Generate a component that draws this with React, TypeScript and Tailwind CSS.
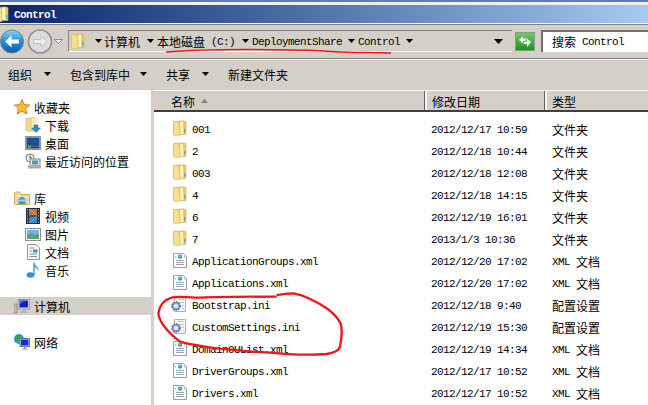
const cjk = "font-['Noto_Sans_CJK_SC','Liberation_Sans',sans-serif] text-[12px] leading-none text-black pt-[2px]";
const mono = "font-['Liberation_Mono','Noto_Sans_CJK_SC',monospace] text-[11px] tracking-[-0.6px] leading-none text-black pt-[3px]";

function Arrow({ className = "" }: { className?: string }) {
  return (
    <svg width="7" height="4" viewBox="0 0 7 4" className={"shrink-0 " + className}>
      <path d="M0 0H7L3.5 4Z" fill="#000" />
    </svg>
  );
}

function Folder({ size = 16 }: { size?: number }) {
  return (
    <svg width={size} height={size} viewBox="0 0 16 16" className="shrink-0">
      <path d="M1.5 1.5 L11 .8 L14 1.5 V14.5 H3 Q1.5 14.5 1.5 13Z" fill="#ecc95c" stroke="#cfae55" strokeWidth="0.6" />
      <path d="M1.5 1.5 L7 2 L8 15.5 L3 15.5 Q1.5 15.5 1.5 13.5Z" fill="#f6e08a" stroke="#d9bc63" strokeWidth="0.6" />
      <path d="M8 2 L11 1.5 L11.5 14 L8.4 14Z" fill="#fdf0b8" />
      <rect x="12" y="9" width="1.4" height="3.5" fill="#4fa6dc" />
    </svg>
  );
}

function XmlDoc() {
  return (
    <svg width="16" height="17" viewBox="0 0 16 17" className="shrink-0">
      <path d="M1.5 1.5H11L14.5 4.5V15.5H1.5Z" fill="#fbfcfd" stroke="#9a9fa6" />
      <circle cx="8" cy="4.6" r="2.2" fill="#2f9c8f" />
      <circle cx="7.5" cy="4.2" r="1" fill="#8fd0f0" />
      <path d="M4 4.5L3 5.2M12 4.5L13 5.2" stroke="#556" strokeWidth="0.7" />
      <path d="M4 8.5H12M4 10.5H12M4 12.5H12" stroke="#9aa4b4" />
    </svg>
  );
}

function IniDoc() {
  return (
    <svg width="17" height="17" viewBox="0 0 17 17" className="shrink-0">
      <path d="M4.5 1.5H15.5V15.5H4.5Z" fill="#f6f6f6" stroke="#b0b0b0" />
      <path d="M8 3.5H14M10 6.5H14M12 9.5H14M12 12.5H14" stroke="#c6c6c6" />
      <circle cx="6" cy="10" r="4" fill="#8fa5c8" stroke="#4d6a9a" strokeWidth="1.6" strokeDasharray="1.6 1" />
      <circle cx="6" cy="10" r="2" fill="#eef2f8" />
    </svg>
  );
}

function Star() {
  return (
    <svg width="16" height="16" viewBox="0 0 16 16" className="shrink-0">
      <path d="M8 .5L10.2 5.6L15.6 6.1L11.5 9.7L12.8 15L8 12.2L3.2 15L4.5 9.7L.4 6.1L5.8 5.6Z" fill="#fbc02d" stroke="#e2762a" />
    </svg>
  );
}

function Downloads() {
  return (
    <svg width="16" height="16" viewBox="0 0 16 16" className="shrink-0">
      <path d="M1 1.5L9 .5L11 1.5V14H2Q1 14 1 13Z" fill="#f0d98a" stroke="#c9ad5a" strokeWidth="0.6" />
      <path d="M7 1.5H11V11H7Z" fill="#fbeeb5" />
      <path d="M9 8H13V11H15.5L11 15.5L6.5 11H9Z" fill="#2d8fdc" stroke="#1d5fa8" strokeWidth="0.5" />
    </svg>
  );
}

function Desktop() {
  return (
    <svg width="16" height="14" viewBox="0 0 16 14" className="shrink-0">
      <rect x=".5" y=".5" width="15" height="13" fill="#c9ced6" stroke="#8a93a0" />
      <rect x="1.5" y="1.5" width="13" height="9" fill="#1c4f95" />
      <rect x="1.5" y="10.5" width="13" height="2" fill="#3a3a3a" />
      <rect x="3" y="9.5" width="3" height="3" fill="#5aa04a" />
    </svg>
  );
}

function Recent() {
  return (
    <svg width="16" height="16" viewBox="0 0 16 16" className="shrink-0">
      <circle cx="5" cy="5" r="4" fill="#f2f2f2" stroke="#777" />
      <path d="M5 2.5V5H7" stroke="#444" fill="none" />
      <rect x="5" y="6" width="10" height="7" fill="#dfe4ea" stroke="#808890" />
      <rect x="7" y="7.5" width="6" height="4" fill="#5c97a8" />
      <rect x="3" y="13" width="13" height="2.5" fill="#a9a9a9" />
    </svg>
  );
}

function Library() {
  return (
    <svg width="16" height="14" viewBox="0 0 16 14" className="shrink-0">
      <path d="M.5 2V12.5Q.5 13.5 1.5 13.5H14.5Q15.5 13.5 15.5 12.5V3.5H7L5.5 1H1.5Z" fill="#f1de9a" stroke="#c7a95a" />
      <path d="M4.5 8L8 5.5L11.5 8V13H4.5Z" fill="#3d96d6" />
      <rect x="2.5" y="8.5" width="11" height="2" fill="#9ed0ee" />
    </svg>
  );
}

function Video() {
  return (
    <svg width="14" height="16" viewBox="0 0 14 16" className="shrink-0">
      <rect x="0" y="0" width="14" height="16" fill="#1f2f3a" />
      <rect x="3" y="1" width="8" height="6.5" fill="#d0703a" />
      <rect x="3" y="8.5" width="8" height="6.5" fill="#3f86c8" />
      <path d="M3 1L11 7.5M11 8.5L3 15" stroke="#7ab0d8" />
      <path d="M1 2H2M1 5H2M1 8H2M1 11H2M1 14H2M12 2H13M12 5H13M12 8H13M12 11H13M12 14H13" stroke="#dfe8ee" />
    </svg>
  );
}

function Pictures() {
  return (
    <svg width="16" height="13" viewBox="0 0 16 13" className="shrink-0">
      <rect x=".5" y=".5" width="15" height="12" fill="#f4f5f6" stroke="#8c8f94" />
      <rect x="2" y="2" width="12" height="5" fill="#6fb6dc" />
      <path d="M2 11V7L6 5L10 7L14 6V11Z" fill="#5f9f7e" />
    </svg>
  );
}

function Docs() {
  return (
    <svg width="13" height="16" viewBox="0 0 13 16" className="shrink-0">
      <path d="M.5.5H9L12.5 3.5V15.5H.5Z" fill="#f4f6fa" stroke="#8e97a6" />
      <path d="M2.5 4H7M2.5 7H5M2.5 10H10M2.5 12.5H10" stroke="#7e8fae" />
      <rect x="6" y="5.5" width="4.5" height="3" fill="#4f9a8a" />
    </svg>
  );
}

function Music() {
  return (
    <svg width="14" height="16" viewBox="0 0 14 16" className="shrink-0">
      <ellipse cx="4.5" cy="13" rx="4" ry="2.8" fill="#2f8fd0" />
      <path d="M7.3 13V.5H8.6C9 4 13 5 12.6 9.5C11.6 7 10 6 8.8 5.6V13Z" fill="#4aa4de" />
    </svg>
  );
}

function Computer() {
  return (
    <svg width="16" height="15" viewBox="0 0 16 15" className="shrink-0">
      <rect x="0" y="5" width="3" height="9" fill="#bfc2c0" stroke="#6b6f6c" strokeWidth="0.6" />
      <rect x="4" y=".5" width="11.5" height="9.5" fill="#dadcdc" stroke="#979a9c" />
      <rect x="5.5" y="1.5" width="8.5" height="7" fill="#1020c8" />
      <path d="M5.5 1.5H10L5.5 6Z" fill="#3470e8" />
      <path d="M8 10.5H11.5V12.5H13V14H6.5V12.5H8Z" fill="#b0b2b2" />
    </svg>
  );
}

function Network() {
  return (
    <svg width="16" height="16" viewBox="0 0 16 16" className="shrink-0">
      <circle cx="5" cy="5" r="5" fill="#2c9ad0" />
      <path d="M1.5 2.5Q4 .5 7 1L5.5 4L3 5L4 8L1 6.5Z" fill="#3fa040" />
      <rect x="6" y="4.5" width="9.5" height="8" fill="#dfe1e2" stroke="#6d7480" />
      <rect x="7" y="5.5" width="7.5" height="6" fill="#1030d8" />
      <path d="M10 12.5H11.5V14.5H13.5V15.5H8V14.5H10Z" fill="#8b9196" />
    </svg>
  );
}

function BackBtn() {
  return (
    <svg width="25" height="25" viewBox="0 0 25 25" className="shrink-0">
      <defs>
        <linearGradient id="bb" x1="0" y1="0" x2="0" y2="1">
          <stop offset="0" stopColor="#8fd4f5" />
          <stop offset=".5" stopColor="#1a8fe0" />
          <stop offset="1" stopColor="#0a5fb0" />
        </linearGradient>
      </defs>
      <circle cx="12" cy="12.5" r="11.5" fill="url(#bb)" stroke="#777a80" />
      <path d="M5 12.5L11.5 6.5V10.5H19V14.5H11.5V18.5Z" fill="#fff" />
    </svg>
  );
}

function FwdBtn() {
  return (
    <svg width="26" height="25" viewBox="0 0 26 25" className="ml-[2px] shrink-0">
      <circle cx="13" cy="12.5" r="11.5" fill="#dcdcdc" stroke="#8f8f8f" strokeWidth="1.6" />
      <path d="M20 12.5L14 7V10.5H6.5V14.5H14V18Z" fill="#efefef" stroke="#b5b5b5" strokeWidth="0.8" />
    </svg>
  );
}

function Refresh() {
  return (
    <div className="ml-[3px] flex h-[19px] w-[20px] shrink-0 items-center justify-center border border-[#8a9a8a] bg-gradient-to-b from-[#6fc86a] to-[#0a9a0a]">
      <svg width="14" height="13" viewBox="0 0 14 13">
        <path d="M1 5L5 1V3.5H9L7 6H5V8.5Z" fill="#fff" />
        <path d="M13 7L9 12V9H5L7 6.5H9V3.5Z" fill="#fff" />
      </svg>
    </div>
  );
}

function NavItem({ icon, label, indent, selected }: { icon: React.ReactNode; label: string; indent?: boolean; selected?: boolean }) {
  return (
    <div className={"flex h-[18px] items-center " + (indent ? "pl-[25px]" : "pl-[14px]") + (selected ? " bg-[#d4d0c8]" : "")}>
      <div className="flex w-[16px] justify-center">{icon}</div>
      <span className={cjk + " ml-[4px]"}>{label}</span>
    </div>
  );
}

const rows: { name: string; date: string; type: string; kind: "folder" | "xml" | "ini" }[] = [
  { name: "001", date: "2012/12/17 10:59", type: "文件夹", kind: "folder" },
  { name: "2", date: "2012/12/18 10:44", type: "文件夹", kind: "folder" },
  { name: "003", date: "2012/12/18 12:08", type: "文件夹", kind: "folder" },
  { name: "4", date: "2012/12/18 14:15", type: "文件夹", kind: "folder" },
  { name: "6", date: "2012/12/19 16:01", type: "文件夹", kind: "folder" },
  { name: "7", date: "2013/1/3 10:36", type: "文件夹", kind: "folder" },
  { name: "ApplicationGroups.xml", date: "2012/12/20 17:02", type: "XML 文档", kind: "xml" },
  { name: "Applications.xml", date: "2012/12/20 17:02", type: "XML 文档", kind: "xml" },
  { name: "Bootstrap.ini", date: "2012/12/18 9:40", type: "配置设置", kind: "ini" },
  { name: "CustomSettings.ini", date: "2012/12/19 15:30", type: "配置设置", kind: "ini" },
  { name: "DomainOUList.xml", date: "2012/12/19 14:34", type: "XML 文档", kind: "xml" },
  { name: "DriverGroups.xml", date: "2012/12/17 10:52", type: "XML 文档", kind: "xml" },
  { name: "Drivers.xml", date: "2012/12/17 10:52", type: "XML 文档", kind: "xml" },
];

function TypeText({ text }: { text: string }) {
  if (text.startsWith("XML")) {
    return (
      <span className="flex items-center">
        <span className={mono}>XML</span>
        <span className={cjk + " ml-[6px]"}>文档</span>
      </span>
    );
  }
  return <span className={cjk}>{text}</span>;
}

export default function App() {
  return (
    <div className="relative flex h-[405px] w-[648px] flex-col overflow-hidden bg-white">
      <div className="h-[2px] bg-[#5a7fb0]" />
      <div className="h-[3px] bg-[#eef0ee]" />
      <div className="flex h-[18px] items-center overflow-hidden bg-gradient-to-r from-[#0a246a] to-[#a6caf0]">
        <div className="-ml-[6px] flex w-[20px]"><Folder size={16} /></div>
        <span className="font-['Liberation_Mono',monospace] text-[11px] tracking-[-0.6px] font-bold leading-none text-white pt-[2px]">Control</span>
      </div>
      <div className="h-[1px] bg-[#f4f4f0]" />
      <div className="h-[1px] bg-[#808080]" />
      <div className="flex h-[33px] items-center bg-[#d4d0c8] pb-[1px]">
        <div className="flex items-center">
          <BackBtn />
          <FwdBtn />
          <svg width="9" height="5" viewBox="0 0 9 5" className="ml-[1px]">
            <path d="M.5.5H8.5L4.5 4.5Z" fill="#f0f0f0" stroke="#8a8a8a" />
          </svg>
        </div>
        <div className="ml-[5px] flex h-[22px] w-[444px] items-center border-b border-l border-b-white border-l-[#808080] border-t border-t-[#808080] pl-[1px]">
          <Folder size={16} />
          <Arrow className="ml-[9px]" />
          <span className={cjk + " ml-[2px]"}>计算机</span>
          <Arrow className="ml-[7px]" />
          <span className={cjk + " ml-[3px]"}>本地磁盘</span>
          <span className={mono + " ml-[6px]"}>(C:)</span>
          <Arrow className="ml-[7px]" />
          <span className={mono + " ml-[3px]"}>DeploymentShare</span>
          <Arrow className="ml-[6px]" />
          <span className={mono + " ml-[3px]"}>Control</span>
          <Arrow className="ml-[6px]" />
          <svg width="9" height="5" viewBox="0 0 9 5" className="ml-[81px]">
            <path d="M0 0H9L4.5 5Z" fill="#000" />
          </svg>
        </div>
        <Refresh />
        <div className="ml-[6px] flex h-[22px] flex-1 items-center border-l-2 border-t-2 border-l-[#707070] border-t-[#707070] bg-white pb-[2px] pl-[9px]">
          <span className={cjk}>搜索</span>
          <span className={mono + " ml-[6px]"}>Control</span>
        </div>
      </div>
      <div className="h-[1px] bg-[#808080]" />
      <div className="h-[1px] bg-[#f4f4f0]" />
      <div className="flex h-[30px] items-center bg-[#d4d0c8] pb-[2px] pl-[8px]">
        <span className={cjk}>组织</span>
        <Arrow className="ml-[12px]" />
        <span className={cjk + " ml-[19px]"}>包含到库中</span>
        <Arrow className="ml-[10px]" />
        <span className={cjk + " ml-[19px]"}>共享</span>
        <Arrow className="ml-[12px]" />
        <span className={cjk + " ml-[19px]"}>新建文件夹</span>
      </div>
      <div className="flex min-h-0 flex-1">
        <div className="flex w-[151px] shrink-0 flex-col pt-[8px]">
          <NavItem icon={<Star />} label="收藏夹" />
          <NavItem icon={<Downloads />} label="下载" indent />
          <NavItem icon={<Desktop />} label="桌面" indent />
          <NavItem icon={<Recent />} label="最近访问的位置" indent />
          <div className="h-[19px]" />
          <NavItem icon={<Library />} label="库" />
          <NavItem icon={<Video />} label="视频" indent />
          <NavItem icon={<Pictures />} label="图片" indent />
          <NavItem icon={<Docs />} label="文档" indent />
          <NavItem icon={<Music />} label="音乐" indent />
          <div className="h-[18px]" />
          <NavItem icon={<Computer />} label="计算机" selected />
          <div className="h-[18px]" />
          <NavItem icon={<Network />} label="网络" />
        </div>
        <div className="w-[3px] shrink-0 bg-[#d4d0c8]" />
        <div className="flex min-w-0 flex-1 flex-col">
          <div className="flex h-[22px] shrink-0 items-stretch border-b-2 border-t border-b-[#404040] border-t-white bg-[#d4d0c8]">
            <div className="flex w-[271px] items-center pl-[17px]">
              <span className={cjk}>名称</span>
              <svg width="7" height="4" viewBox="0 0 7 4" className="ml-[6px]">
                <path d="M0 4H7L3.5 0Z" fill="#808080" />
              </svg>
            </div>
            <div className="flex w-[120px] items-center border-l-2 border-l-[#f4f4f0] pl-[5px] shadow-[inset_1px_0_0_0_#d4d0c8,-1px_0_0_0_#606060]">
              <span className={cjk}>修改日期</span>
            </div>
            <div className="flex flex-1 items-center border-l-2 border-l-[#f4f4f0] pl-[5px] shadow-[-1px_0_0_0_#606060]">
              <span className={cjk}>类型</span>
            </div>
          </div>
          <div className="flex flex-col pt-[6px]">
            {rows.map((r) => (
              <div key={r.name} className="flex h-[22px] shrink-0 items-center">
                <div className={"flex w-[38px] justify-end pb-[2px] " + (r.kind === "ini" ? "pr-[5px]" : "pr-[4px]")}>
                  {r.kind === "folder" ? <Folder /> : r.kind === "xml" ? <XmlDoc /> : <IniDoc />}
                </div>
                <span className={mono + " w-[239px]"}>{r.name}</span>
                <span className={mono + " w-[121px]"}>{r.date}</span>
                <TypeText text={r.type} />
              </div>
            ))}
          </div>
        </div>
      </div>
      <svg className="pointer-events-none absolute left-0 top-0" width="648" height="405" viewBox="0 0 648 405" fill="none">
        <path d="M166 52C190 50 240 49 290 50C320 50 345 53 365 52.5C375 52.5 385 53 391 53" stroke="#f5121a" strokeWidth="1.6" />
        <g transform="translate(150 245) scale(0.3333)">
          <path
            d="M380 155C300 155 200 156 150 158C110 158 85 152 65 158C40 165 28 185 25 205C28 230 45 255 90 290C130 302 170 305 200 310C270 315 310 322 350 322C410 328 470 332 530 327C555 322 568 315 570 305C575 280 578 255 572 235C560 215 545 200 530 190C500 170 460 150 430 145C410 145 395 148 380 150"
            stroke="#f5121a"
            strokeWidth="7"
          />
        </g>
      </svg>
    </div>
  );
}
